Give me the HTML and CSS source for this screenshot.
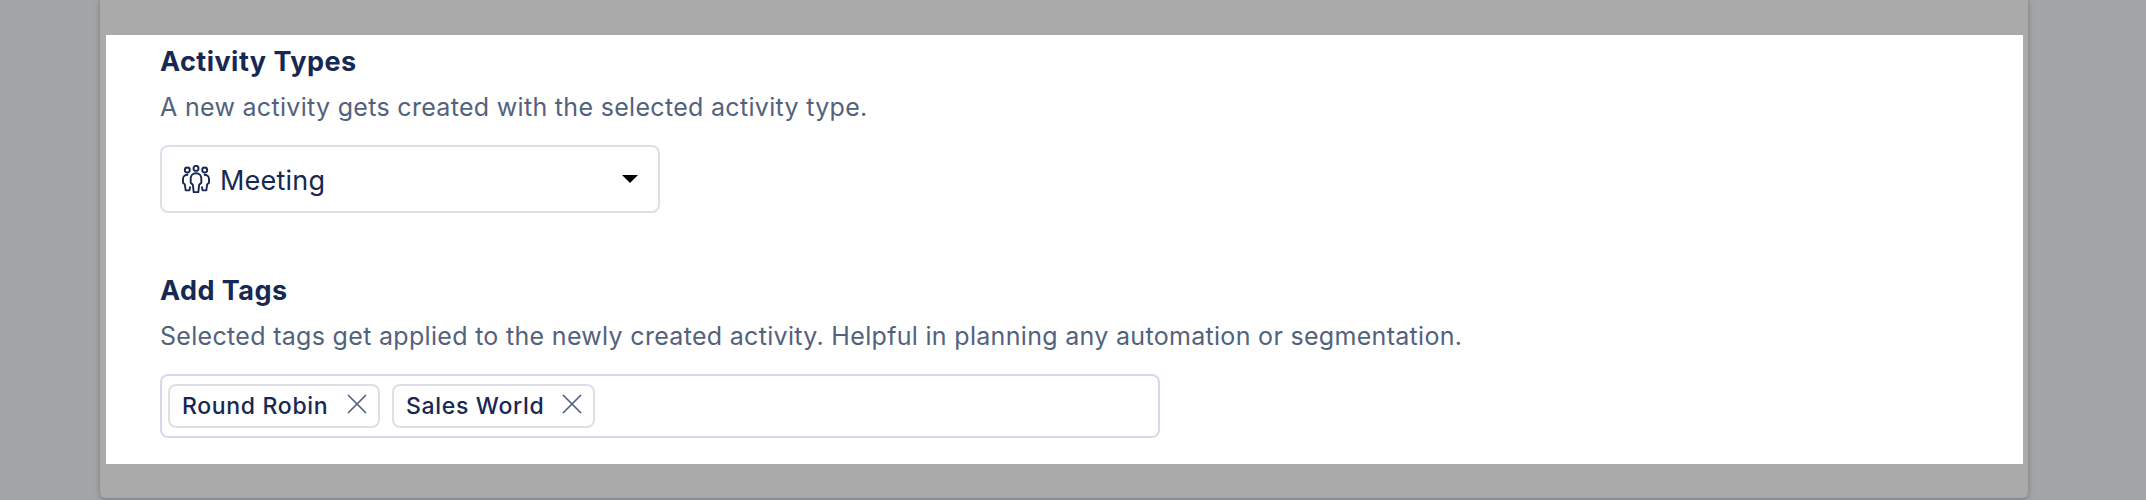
FILE: index.html
```html
<!DOCTYPE html>
<html lang="en">
<head>
<meta charset="utf-8">
<title>Activity settings</title>
<link rel="stylesheet" href="styles.css">
</head>
<body>
<div class="panel">
  <main class="content">
    <section class="field">
      <h2 class="title">Activity Types</h2>
      <p class="hint">A new activity gets created with the selected activity type.</p>
      <div class="select">
        <svg class="people" viewBox="0 0 28 28">
          <circle cx="14" cy="3.4" r="2.5"/>
          <circle cx="5.3" cy="5" r="2.5"/>
          <circle cx="22.7" cy="5" r="2.5"/>
          <path d="M14 8.300c-3.400 0-5.300 2.300-5.300 5.200v4.200l2.100 2 .9 7.400h4.600l.9-7.400 2.100-2v-4.200c0-2.900-1.900-5.200-5.300-5.200z"/>
          <path d="M6.200 9.700C2.700 9.500 1 11.500 1 14v3.700l1.800 1.700.9 6h3.700l.8-3.900"/>
          <path d="M21.800 9.700C25.300 9.500 27 11.500 27 14v3.700l-1.800 1.700-.9 6h-3.700l-.8-3.900"/>
        </svg>
        <span class="value">Meeting</span>
        <svg class="caret" viewBox="0 0 16 8"><path d="M0 0h16L8 8z"/></svg>
      </div>
    </section>
    <section class="field">
      <h2 class="title">Add Tags</h2>
      <p class="hint">Selected tags get applied to the newly created activity. Helpful in planning any automation or segmentation.</p>
      <div class="tags">
        <span class="tag tag-first"><span class="label">Round Robin</span><svg class="close" viewBox="0 0 20 20"><path d="M1 1l18 18M19 1L1 19"/></svg></span>
        <span class="tag tag-second"><span class="label">Sales World</span><svg class="close" viewBox="0 0 20 20"><path d="M1 1l18 18M19 1L1 19"/></svg></span>
      </div>
    </section>
  </main>
</div>
</body>
</html>
```
FILE: styles.css
```css
* { box-sizing: border-box; }
body {
  margin: 0;
  height: 500px;
  overflow: hidden;
  background: #a2a4a6;
  font-family: Inter, "Liberation Sans", sans-serif;
  color: #172852;
}
.panel {
  width: 1928px;
  height: 498px;
  margin-left: 100px;
  padding: 35px 5px 0 6px;
  background: #aaa;
  border-radius: 0 0 6px 6px;
  box-shadow: 0 1px 5px rgba(70, 75, 95, .5);
}
.content {
  height: 429px;
  padding: 9px 54px 0;
  background: #fff;
}
.field { height: 229px; }
.title, .hint { margin: 0; white-space: nowrap; }
.title {
  font-size: 27px;
  line-height: 35px;
  font-weight: 700;
  letter-spacing: .46px;
}
.hint {
  margin-top: 12px;
  font-size: 25px;
  line-height: 32px;
  letter-spacing: .31px;
  color: #53627c;
}
.select {
  display: flex;
  align-items: center;
  width: 500px;
  height: 68px;
  margin-top: 22px;
  padding: 0 20px;
  border: 2px solid #dfdfe7;
  border-radius: 8px;
}
.people {
  width: 28px;
  height: 28px;
  fill: none;
  stroke: #172852;
  stroke-width: 1.9;
  stroke-linejoin: round;
}
.value {
  margin-left: 10px;
  padding-top: 3px;
  font-size: 27px;
  line-height: 34px;
  letter-spacing: .2px;
}
.caret { width: 16px; height: 8px; margin-left: auto; }
.tags {
  display: flex;
  gap: 12px;
  width: 1000px;
  height: 64px;
  margin-top: 22px;
  padding: 8px 6px;
  border: 2px solid #d5d9e9;
  border-radius: 8px;
}
.tag {
  display: flex;
  justify-content: space-between;
  height: 44px;
  padding: 0 11px 0 12px;
  border: 2px solid #dfdfe7;
  border-radius: 8px;
  font-size: 23px;
  line-height: 41px;
  font-weight: 500;
  letter-spacing: .68px;
  white-space: nowrap;
}
.tag-first { width: 212px; }
.tag-second { width: 203px; }
.close {
  width: 20px;
  height: 20px;
  margin-top: 8px;
  fill: none;
  stroke: #53627c;
  stroke-width: 1.7;
}
```
